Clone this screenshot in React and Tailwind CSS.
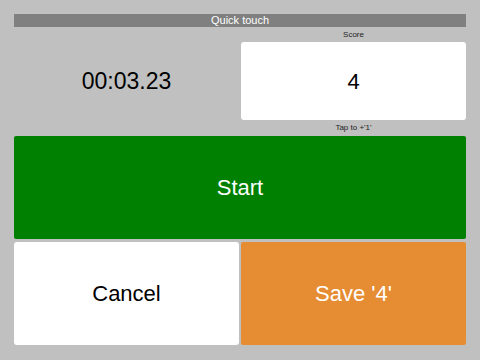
export default function App() {
  return (
    <div
      className="w-[480px] h-[360px] bg-[#c0c0c0] px-[14px] pt-[14px]"
      style={{ fontFamily: '"Liberation Sans", Arial, sans-serif' }}
    >
      <div className="h-[13px] bg-[#808080] text-white text-[11px] leading-[13px] text-center">
        Quick touch
      </div>
      <div className="grid grid-cols-2 gap-x-[2px]">
        <div />
        <div className="h-[15px] text-[8px] leading-[15px] text-center text-[#222]">
          Score
        </div>
        <div className="h-[78px] flex items-center justify-center text-[23px] text-black">
          00:03.23
        </div>
        <div className="h-[78px] bg-white rounded-[3px] flex items-center justify-center text-[22px] text-black">
          4
        </div>
        <div />
        <div className="h-[16px] text-[8px] leading-[16px] text-center text-[#222]">
          Tap to +'1'
        </div>
      </div>
      <div className="h-[103px] bg-[#008000] rounded-[2px] flex items-center justify-center text-white text-[22px]">
        Start
      </div>
      <div className="mt-[3px] grid grid-cols-2 gap-x-[2px] h-[103px]">
        <div className="bg-white rounded-[3px] flex items-center justify-center text-black text-[22px]">
          Cancel
        </div>
        <div className="bg-[#e68c32] rounded-[2px] flex items-center justify-center text-white text-[22px]">
          Save '4'
        </div>
      </div>
    </div>
  );
}
